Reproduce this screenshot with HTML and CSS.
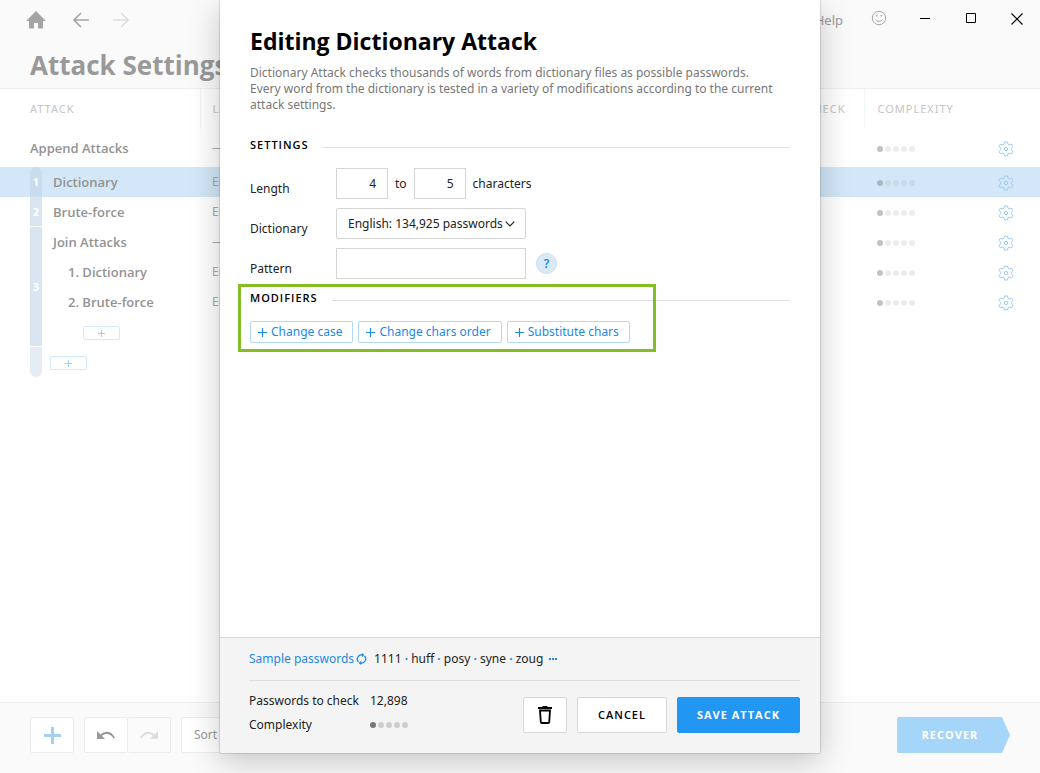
FILE: index.html
```html
<!DOCTYPE html>
<html lang="en">
<head>
    <meta charset="UTF-8">
    <meta name="viewport" content="width=device-width, initial-scale=1.0">
    <title>Attack Settings</title>
    <link rel="stylesheet" href="styles.css">
</head>
<body>
    <!-- shared icons -->
    <svg class="sprite" aria-hidden="true">
        <symbol id="gear" viewBox="0 0 16 16">
            <path d="M6.500 1h3l.5 2.200 1.400.8 2.200-.8L15 5.600l-1.600 1.600v1.600L15 10.400l-1.400 2.400-2.200-.8-1.400.8L9.500 15h-3L6 12.800 4.600 12l-2.200.8L1 10.400l1.600-1.600V7.200L1 5.600l1.400-2.400 2.200.8L6 3.200z" fill="none" stroke="currentColor" stroke-linejoin="round"/>
            <circle cx="8" cy="8" r="1.700" fill="none" stroke="currentColor"/>
        </symbol>
        <symbol id="plus" viewBox="0 0 10 10">
            <path d="M5 0v10M0 5h10" fill="none" stroke="currentColor" stroke-width="1.300"/>
        </symbol>
    </svg>

    <div class="app">
        <header class="header">
            <nav class="nav">
                <button class="icon-btn home" aria-label="Home">
                    <svg width="20" height="18" viewBox="0 0 20 18"><path d="M10 0L0 10h3v7.500h5V12h4v5.500h5V10h3z" fill="currentColor"/></svg>
                </button>
                <button class="icon-btn" aria-label="Back">
                    <svg width="16" height="16" viewBox="0 0 16 16"><path d="M16 8H1M8 1L1 8l7 7" fill="none" stroke="currentColor" stroke-width="1.600"/></svg>
                </button>
                <button class="icon-btn faded" aria-label="Forward">
                    <svg width="16" height="16" viewBox="0 0 16 16"><path d="M0 8h15M8 1l7 7-7 7" fill="none" stroke="currentColor" stroke-width="1.600"/></svg>
                </button>
                <div class="window-tools">
                    <a href="#" class="help-link">Help</a>
                    <button class="icon-btn" aria-label="Feedback">
                        <svg width="16" height="16" viewBox="0 0 16 16"><g fill="none" stroke="currentColor"><circle cx="8" cy="8" r="6.700"/><path d="M4.500 9.500c1.200 2.400 5.800 2.400 7 0"/></g><path d="M5 5h1.500v1.500H5zM9.500 5H11v1.500H9.500z" fill="currentColor"/></svg>
                    </button>
                    <button class="icon-btn window-btn" aria-label="Minimize">
                        <svg width="16" height="16" viewBox="0 0 16 16"><path d="M3 8.500h10" stroke="currentColor"/></svg>
                    </button>
                    <button class="icon-btn window-btn" aria-label="Maximize">
                        <svg width="16" height="16" viewBox="0 0 16 16"><path d="M3.500 3.500h9v9h-9z" fill="none" stroke="currentColor"/></svg>
                    </button>
                    <button class="icon-btn window-btn" aria-label="Close">
                        <svg width="16" height="16" viewBox="0 0 16 16"><path d="M2.500 3.500l11 11m0-11l-11 11" stroke="currentColor" stroke-width="1.200"/></svg>
                    </button>
                </div>
            </nav>
            <h1>Attack Settings</h1>
        </header>

        <main class="content">
            <table class="attacks">
                <colgroup>
                    <col class="col-index">
                    <col class="col-name">
                    <col>
                    <col class="col-complexity">
                    <col class="col-gear">
                </colgroup>
                <thead>
                    <tr>
                        <th colspan="2" class="first">Attack</th>
                        <th><div class="split"><span>Label</span><span>Check</span></div></th>
                        <th colspan="2">Complexity</th>
                    </tr>
                </thead>
                <tbody>
                    <tr class="append">
                        <td colspan="2" class="first name">Append Attacks</td>
                        <td class="label">—</td>
                        <td><span class="dots"><i></i><i></i><i></i><i></i><i></i></span></td>
                        <td><button class="gear" aria-label="Edit"><svg><use href="#gear"/></svg></button></td>
                    </tr>
                    <tr class="selected">
                        <td class="index"><span class="top">1</span></td>
                        <td class="name">Dictionary</td>
                        <td class="label">English</td>
                        <td><span class="dots"><i></i><i></i><i></i><i></i><i></i></span></td>
                        <td><button class="gear" aria-label="Edit"><svg><use href="#gear"/></svg></button></td>
                    </tr>
                    <tr>
                        <td class="index"><span>2</span></td>
                        <td class="name">Brute-force</td>
                        <td class="label">English</td>
                        <td><span class="dots"><i></i><i></i><i></i><i></i><i></i></span></td>
                        <td><button class="gear" aria-label="Edit"><svg><use href="#gear"/></svg></button></td>
                    </tr>
                    <tr>
                        <td class="index" rowspan="4"><span class="tall">3</span></td>
                        <td class="name">Join Attacks</td>
                        <td class="label">—</td>
                        <td><span class="dots"><i></i><i></i><i></i><i></i><i></i></span></td>
                        <td><button class="gear" aria-label="Edit"><svg><use href="#gear"/></svg></button></td>
                    </tr>
                    <tr>
                        <td class="name nested">1. Dictionary</td>
                        <td class="label">English</td>
                        <td><span class="dots"><i></i><i></i><i></i><i></i><i></i></span></td>
                        <td><button class="gear" aria-label="Edit"><svg><use href="#gear"/></svg></button></td>
                    </tr>
                    <tr>
                        <td class="name nested">2. Brute-force</td>
                        <td class="label">English</td>
                        <td><span class="dots"><i></i><i></i><i></i><i></i><i></i></span></td>
                        <td><button class="gear" aria-label="Edit"><svg><use href="#gear"/></svg></button></td>
                    </tr>
                    <tr>
                        <td class="add-cell nested-add" colspan="4"><button class="add" aria-label="Add joined attack"><svg><use href="#plus"/></svg></button></td>
                    </tr>
                    <tr>
                        <td class="index"><span class="bottom"></span></td>
                        <td class="add-cell" colspan="4"><button class="add" aria-label="Add attack"><svg><use href="#plus"/></svg></button></td>
                    </tr>
                </tbody>
            </table>
        </main>

        <footer class="toolbar">
            <button class="tool plus" aria-label="Add"><svg width="17" height="17" viewBox="0 0 17 17"><path d="M8.500 0v17M0 8.500h17" stroke="currentColor" stroke-width="3"/></svg></button>
            <div class="tool-group">
                <button class="tool" aria-label="Undo"><svg width="20" height="10" viewBox="0 0 20 10"><path d="M1 1v8h8L6 6c4-3.500 9-2 11.500 2.500l1.500-.7C16 1 9 0 4.500 4.500z" fill="currentColor"/></svg></button>
                <button class="tool disabled" aria-label="Redo"><svg width="20" height="10" viewBox="0 0 20 10"><path d="M19 1v8h-8l3-3C10 2.500 5 4 2.500 8.500L1 7.800C4 1 11 0 15.500 4.500z" fill="currentColor"/></svg></button>
            </div>
            <button class="tool sort">Sort</button>
            <button class="recover">Recover</button>
        </footer>
    </div>

    <div class="overlay">
        <form class="dialog" role="dialog" aria-labelledby="dialog-title">
            <div class="dialog-body">
                <h2 id="dialog-title">Editing Dictionary Attack</h2>
                <p class="description">Dictionary Attack checks thousands of words from dictionary files as possible passwords.<br>Every word from the dictionary is tested in a variety of modifications according to the current attack settings.</p>

                <h3>Settings</h3>
                <div class="fields">
                    <label for="min-length">Length</label>
                    <div class="field">
                        <input type="text" class="number" id="min-length" value="4">
                        <label for="max-length">to</label>
                        <input type="text" class="number" id="max-length" value="5">
                        <span>characters</span>
                    </div>
                    <label for="dictionary">Dictionary</label>
                    <div class="field">
                        <div class="select">
                            <select id="dictionary">
                                <option>English: 134,925 passwords</option>
                            </select>
                            <svg width="10" height="6" viewBox="0 0 10 6"><path d="M.7.7L5 5 9.300.7" fill="none" stroke="currentColor" stroke-width="1.200"/></svg>
                        </div>
                    </div>
                    <label for="pattern">Pattern</label>
                    <div class="field">
                        <input type="text" class="pattern" id="pattern">
                        <button type="button" class="help">?</button>
                    </div>
                </div>

                <section class="modifiers">
                    <h3>Modifiers</h3>
                    <div class="modifier-list">
                        <button type="button" class="modifier"><svg><use href="#plus"/></svg>Change case</button>
                        <button type="button" class="modifier"><svg><use href="#plus"/></svg>Change chars order</button>
                        <button type="button" class="modifier"><svg><use href="#plus"/></svg>Substitute chars</button>
                    </div>
                </section>
            </div>

            <div class="dialog-footer">
                <div class="samples">
                    <a href="#">Sample passwords</a>
                    <button type="button" class="refresh" aria-label="Refresh">
                        <svg width="11" height="12" viewBox="0 0 11 12"><g fill="none" stroke="currentColor" stroke-width="1.300"><path d="M2.500 9A4.200 4.200 0 0 1 6.500 2M8.500 3a4.200 4.200 0 0 1-4 7"/></g><path d="M5.800 0v4.200L8.400 2zM5.200 12V7.800L2.600 10z" fill="currentColor"/></svg>
                    </button>
                    <span class="words">1111 <b>·</b> huff <b>·</b> posy <b>·</b> syne <b>·</b> zoug</span>
                    <a href="#" class="more" aria-label="More"><i></i><i></i><i></i></a>
                </div>
                <div class="summary">
                    <dl>
                        <dt>Passwords to check</dt>
                        <dd>12,898</dd>
                        <dt>Complexity</dt>
                        <dd><span class="dots"><i></i><i></i><i></i><i></i><i></i></span></dd>
                    </dl>
                    <div class="actions">
                        <button type="button" class="btn delete" aria-label="Delete">
                            <svg width="14" height="18" viewBox="0 0 14 18"><path d="M0 1h4l1-1h4l1 1h4v2H0z" fill="currentColor"/><path d="M2 4.500l.8 11.700q.1.800.9.800h6.600q.8 0 .9-.8L12 4.500z" fill="none" stroke="currentColor" stroke-width="1.800"/></svg>
                        </button>
                        <button type="button" class="btn cancel">Cancel</button>
                        <button type="button" class="btn save">Save attack</button>
                    </div>
                </div>
            </div>
        </form>
    </div>
</body>
</html>
```
FILE: styles.css
```css
*, *::before, *::after {
    box-sizing: border-box;
}

body {
    margin: 0;
    height: 100vh;
    overflow: hidden;
    font-family: "Noto Sans", "Open Sans", sans-serif;
    font-size: 12px;
    line-height: 16px;
    color: #222;
    background: #fff;
}

button, input, select {
    font: inherit;
    color: inherit;
    margin: 0;
}

button {
    padding: 0;
    border: none;
    background: none;
    cursor: pointer;
}

a {
    color: #1e88e5;
    text-decoration: none;
}

svg {
    display: block;
}

h1, h2, h3, p, dl, dd {
    margin: 0;
}

h1, h2, h3, .name, .btn, .recover {
    font-family: "Open Sans", "Noto Sans", sans-serif;
}

.sprite {
    position: absolute;
    width: 0;
    height: 0;
}

/* Main window, washed out behind the dialog */
.app {
    display: flex;
    flex-direction: column;
    height: 100%;
    color: #999;
}

.header {
    height: 89px;
    padding: 8px 11px 0 24px;
    background: #fafafa;
    border-bottom: 1px solid #eee;
}

.nav {
    display: flex;
    align-items: center;
    height: 24px;
    gap: 16px;
}

.icon-btn {
    display: flex;
    align-items: center;
    justify-content: center;
    width: 24px;
    height: 24px;
    color: #a5a5a5;
}

.home {
    margin-right: 5px;
}

.faded {
    color: #ddd;
}

.window-tools {
    display: flex;
    align-items: center;
    align-self: flex-start;
    gap: 22px;
    margin-left: auto;
    height: 20px;
}

.help-link {
    padding-top: 4px;
    font-size: 13px;
    color: #999;
    margin-right: 2px;
}

.window-tools .window-btn {
    color: #000;
}

h1 {
    margin: 17px 0 0 6px;
    font-size: 26px;
    line-height: 32px;
    color: #999;
}

.content {
    flex: 1;
    min-height: 0;
}

.attacks {
    width: 100%;
    table-layout: fixed;
    border-collapse: collapse;
}

.col-index {
    width: 42px;
}

.col-name {
    width: 158px;
}

.col-complexity {
    width: 130px;
}

.col-gear {
    width: 45px;
}

.attacks th {
    height: 40px;
    padding: 0 12px;
    border-left: 1px solid #f4f4f4;
    font-size: 11px;
    font-weight: 400;
    letter-spacing: 1px;
    text-align: left;
    text-transform: uppercase;
    color: #c5c5c5;
}

.attacks th.first {
    border-left: none;
}

.split {
    display: flex;
    justify-content: space-between;
    padding-right: 7px;
}

.attacks td {
    height: 30px;
    padding: 0 12px;
}

.attacks td:last-child {
    padding: 0;
}

.attacks .first {
    padding-left: 30px;
}

.append td {
    height: 38px;
}

.selected {
    background: #d3e7f8;
}

.label {
    color: #aaa;
}

.attacks .name {
    padding-left: 11px;
    font-size: 13px;
    font-weight: 600;
    color: #939393;
}

.attacks .name.first {
    padding-left: 30px;
}

.attacks .name.nested {
    padding-left: 26px;
}

.attacks .index {
    padding: 0 0 0 30px;
    font-size: 11px;
    font-weight: 700;
    color: #fff;
}

.index span {
    display: flex;
    align-items: center;
    justify-content: center;
    height: 30px;
    background: #d9e5f0;
    border-bottom: 1px solid #fff;
}

.index .top {
    background: #c9dced;
    border-bottom: none;
    border-radius: 6px 6px 0 0;
}

.index .tall {
    height: 120px;
}

.index .bottom {
    background: #e5ecf4;
    border-bottom: none;
    border-radius: 0 0 6px 6px;
}

.dots {
    display: flex;
    gap: 2px;
}

.dots i {
    width: 6px;
    height: 6px;
    border-radius: 50%;
    background: #ececec;
}

.dots i:first-child {
    background: #c2c2c2;
}

.selected .dots i {
    background: #c9d9e7;
}

.selected .dots i:first-child {
    background: #a9b7c2;
}

.attacks .dots {
    padding-top: 2px;
}

.gear {
    display: block;
    color: #9ccbf3;
    margin-left: 3px;
    padding-top: 2px;
}

.gear svg {
    width: 16px;
    height: 16px;
}

.attacks .add-cell:last-child {
    padding: 2px 0 0 8px;
}

.attacks .nested-add:last-child {
    padding-left: 41px;
}

.add {
    display: flex;
    align-items: center;
    justify-content: center;
    width: 37px;
    height: 14px;
    border: 1px solid #d3eafc;
    border-radius: 2px;
    color: #90caf9;
}

.add svg {
    width: 7px;
    height: 7px;
}

.toolbar {
    display: flex;
    gap: 10px;
    height: 71px;
    padding: 14px 30px 0;
    background: #fafafa;
    border-top: 1px solid #eee;
}

.tool {
    display: flex;
    align-items: center;
    justify-content: center;
    width: 44px;
    height: 36px;
    border: 1px solid #ebebeb;
    border-radius: 2px;
    background: #fff;
    color: #999;
}

.tool-group {
    display: flex;
}

.tool-group .disabled {
    width: 43px;
    border-left: none;
    background: #fbfbfb;
    color: #ddd;
}

.tool.plus {
    color: #a3d0f5;
}

.tool.sort {
    width: 90px;
    padding-left: 12px;
    justify-content: flex-start;
}

.recover {
    width: 113px;
    height: 36px;
    margin-left: auto;
    padding-right: 7px;
    border-radius: 2px;
    background: #a6d5fa;
    color: #fff;
    font-size: 11px;
    font-weight: 700;
    letter-spacing: 1px;
    text-transform: uppercase;
    clip-path: polygon(0 0, 105px 0, 100% 50%, 105px 100%, 0 100%);
}

/* Dialog */
.overlay {
    position: absolute;
    top: 0;
    right: 220px;
    bottom: 20px;
    left: 220px;
}

.dialog {
    display: flex;
    flex-direction: column;
    height: 100%;
    background: #fff;
    border-radius: 0 0 2px 2px;
    box-shadow: 0 0 1px 1px rgba(0, 0, 0, 0.12), 0 8px 32px rgba(0, 0, 0, 0.22);
}

.dialog-body {
    flex: 1;
    padding: 25px 30px 0;
}

h2 {
    font-size: 23px;
    line-height: 32px;
    color: #000;
}

.description {
    margin: 8px 0 24px;
    color: #777;
}

h3 {
    display: flex;
    align-items: center;
    gap: 14px;
    font-size: 11px;
    line-height: 16px;
    font-weight: 600;
    letter-spacing: 1px;
    text-transform: uppercase;
    color: #000;
}

h3::after {
    content: "";
    flex: 1;
    height: 1px;
    margin-top: 4px;
    background: #ddd;
}

.fields {
    display: grid;
    grid-template-columns: 86px 1fr;
    gap: 9px 0;
    margin: 15px 0 11px;
}

.fields > label {
    padding-top: 13px;
}

.field {
    display: flex;
    align-items: center;
    gap: 7px;
}

.field input, .field select {
    height: 31px;
    border: 1px solid #d5d5d5;
    border-radius: 0;
    background: #fff;
    outline: none;
}

.field .number {
    width: 52px;
    padding: 0 11px;
    text-align: right;
}

.select {
    position: relative;
    width: 190px;
}

.field .select select {
    width: 100%;
    padding: 0 11px;
    border-radius: 2px;
    appearance: none;
}

.select svg {
    position: absolute;
    top: 13px;
    right: 11px;
    pointer-events: none;
}

.field .pattern {
    width: 190px;
    padding: 0 11px;
}

.help {
    width: 21px;
    height: 21px;
    margin-left: 3px;
    border: 1px solid #c5dff5;
    border-radius: 50%;
    background: #dbe9f5;
    color: #1e88e5;
    font-weight: 600;
}

.modifiers {
    position: relative;
}

/* green highlight frame */
.modifiers::before {
    content: "";
    position: absolute;
    top: -6px;
    left: -12px;
    width: 418px;
    height: 68px;
    border: 3px solid #86bc25;
    pointer-events: none;
}

.modifier-list {
    display: flex;
    gap: 5px;
    margin-top: 15px;
}

.modifier {
    display: flex;
    align-items: center;
    gap: 4px;
    height: 22px;
    padding: 0 10px 0 7px;
    border: 1px solid #b3d9fa;
    border-radius: 2px;
    color: #1e88e5;
}

.modifier svg {
    width: 9px;
    height: 9px;
}

.dialog-footer {
    padding: 0 20px 16px 29px;
    background: #f4f4f4;
    border-top: 1px solid #d8d8d8;
    border-radius: 0 0 2px 2px;
}

.samples {
    display: flex;
    align-items: center;
    height: 43px;
    border-bottom: 1px solid #ddd;
}

.refresh {
    margin: 0 7px 0 2px;
    color: #1e88e5;
}

.words b {
    color: #1e88e5;
}

.more {
    display: flex;
    gap: 1px;
    margin-left: 6px;
}

.more i {
    width: 2px;
    height: 2px;
    background: #1e88e5;
}

.summary {
    display: flex;
    justify-content: space-between;
    align-items: flex-end;
    padding-top: 8px;
}

dl {
    display: grid;
    grid-template-columns: 121px auto;
    align-items: center;
    grid-auto-rows: 24px;
}

dl .dots i {
    background: #ccc;
}

dl .dots i:first-child {
    background: #777;
}

.actions {
    display: flex;
    gap: 10px;
    padding-bottom: 4px;
}

.btn {
    display: flex;
    align-items: center;
    justify-content: center;
    height: 36px;
    border: 1px solid #d8d8d8;
    border-radius: 2px;
    background: #fff;
    color: #000;
    font-size: 11px;
    font-weight: 600;
    letter-spacing: 1px;
    text-transform: uppercase;
}

.delete {
    width: 44px;
}

.cancel {
    width: 90px;
}

.save {
    width: 123px;
    border-color: #2196f3;
    background: #2196f3;
    color: #fff;
    font-weight: 700;
}
```
